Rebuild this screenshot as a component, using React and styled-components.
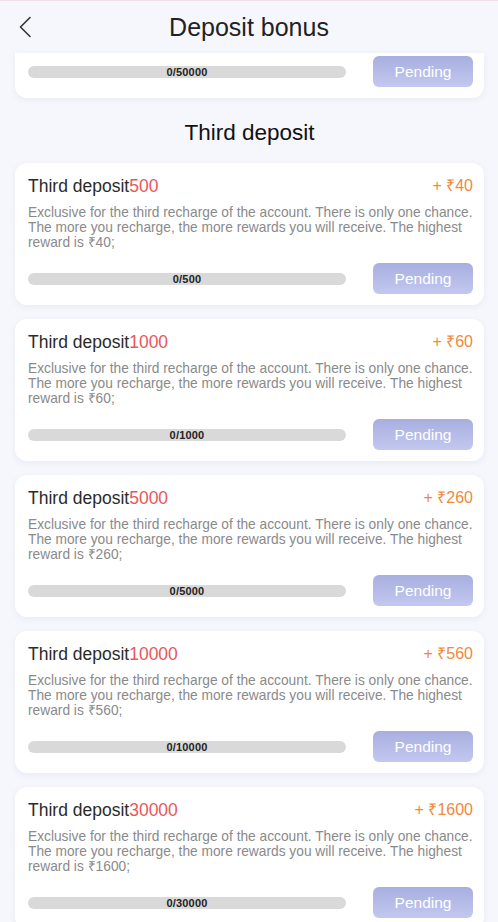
import React from "react";
import styled, { createGlobalStyle } from "styled-components";

const Global = createGlobalStyle`
  html, body { margin: 0; padding: 0; background: #f6f7fc; }
  body { font-family: "Liberation Sans", Arial, sans-serif; overflow: hidden; }
  * { box-sizing: border-box; }
`;

const Page = styled.div`
  width: 498px;
  min-height: 922px;
  background: #f6f7fc;
  border-top: 1px solid #f1dfe6;
  display: flex;
  flex-direction: column;
`;

const Header = styled.header`
  height: 52px;
  display: grid;
  grid-template-columns: 50px 1fr 50px;
  align-items: center;
`;

const Back = styled.button`
  border: 0;
  background: none;
  padding: 0 0 0 18px;
  display: flex;
  align-items: center;
  cursor: pointer;
`;

const Title = styled.h1`
  margin: 0;
  text-align: center;
  font-size: 25px;
  font-weight: 400;
  color: #222;
  line-height: 30px;
`;

const List = styled.div`
  padding: 0 14px 0 15px;
  display: flex;
  flex-direction: column;
  gap: 14px;
`;

const SectionTitle = styled.h2`
  margin: 6px 0 1px;
  text-align: center;
  font-size: 22.5px;
  font-weight: 400;
  color: #111;
  line-height: 30px;
`;

const Card = styled.div`
  background: #fff;
  border-radius: 12px;
  padding: ${(p) => (p.$clipped ? "3px 11px 11px 13px" : "12px 11px 11px 13px")};
  box-shadow: 0 2px 6px rgba(170, 176, 220, 0.18);
  ${(p) => p.$clipped && "border-top-left-radius: 0; border-top-right-radius: 0;"}
`;

const CardHead = styled.div`
  display: flex;
  justify-content: space-between;
  align-items: center;
  line-height: 22px;
`;

const CardTitle = styled.div`
  font-size: 17.5px;
  color: #2b2b2b;
`;

const Amount = styled.span`
  color: #e9575b;
`;

const Reward = styled.div`
  font-size: 16px;
  color: #ee8a3c;
`;

const Desc = styled.p`
  margin: 8px 0 0;
  font-size: 13.75px;
  line-height: 15px;
  color: #8a8a8a;
`;

const Footer = styled.div`
  margin-top: ${(p) => (p.$clipped ? "0" : "13px")};
  display: flex;
  align-items: center;
  justify-content: space-between;
`;

const Bar = styled.div`
  width: 318px;
  height: 12px;
  border-radius: 6px;
  background: #d9d9d9;
  display: flex;
  align-items: center;
  justify-content: center;
  font-size: 11px;
  color: #222;
  font-weight: 700;
  letter-spacing: 0.2px;
`;

const Pending = styled.button`
  width: 100px;
  height: 31px;
  border: 0;
  border-radius: 6px;
  background: linear-gradient(180deg, #a8afdf 0%, #c3c8f0 100%);
  color: #fff;
  font-family: "Liberation Sans", Arial, sans-serif;
  font-size: 15.5px;
`;

const items = [
  { amount: 500, reward: 40 },
  { amount: 1000, reward: 60 },
  { amount: 5000, reward: 260 },
  { amount: 10000, reward: 560 },
  { amount: 30000, reward: 1600 },
];

export default function App() {
  return (
    <Page>
      <Global />
      <Header>
        <Back aria-label="back">
          <svg width="14" height="22" viewBox="0 0 14 22" fill="none">
            <path d="M12 1.5 L2.5 11 L12 20.5" stroke="#333" strokeWidth="1.6" strokeLinecap="round" strokeLinejoin="round" />
          </svg>
        </Back>
        <Title>Deposit bonus</Title>
        <span />
      </Header>
      <List>
        <Card $clipped>
          <Footer $clipped>
            <Bar>0/50000</Bar>
            <Pending>Pending</Pending>
          </Footer>
        </Card>
        <SectionTitle>Third deposit</SectionTitle>
        {items.map((it) => (
          <Card key={it.amount}>
            <CardHead>
              <CardTitle>
                Third deposit<Amount>{it.amount}</Amount>
              </CardTitle>
              <Reward>+ ₹{it.reward}</Reward>
            </CardHead>
            <Desc>
              Exclusive for the third recharge of the account. There is only one chance. The more you recharge, the more rewards you will receive. The highest reward is ₹{it.reward};
            </Desc>
            <Footer>
              <Bar>0/{it.amount}</Bar>
              <Pending>Pending</Pending>
            </Footer>
          </Card>
        ))}
      </List>
    </Page>
  );
}
